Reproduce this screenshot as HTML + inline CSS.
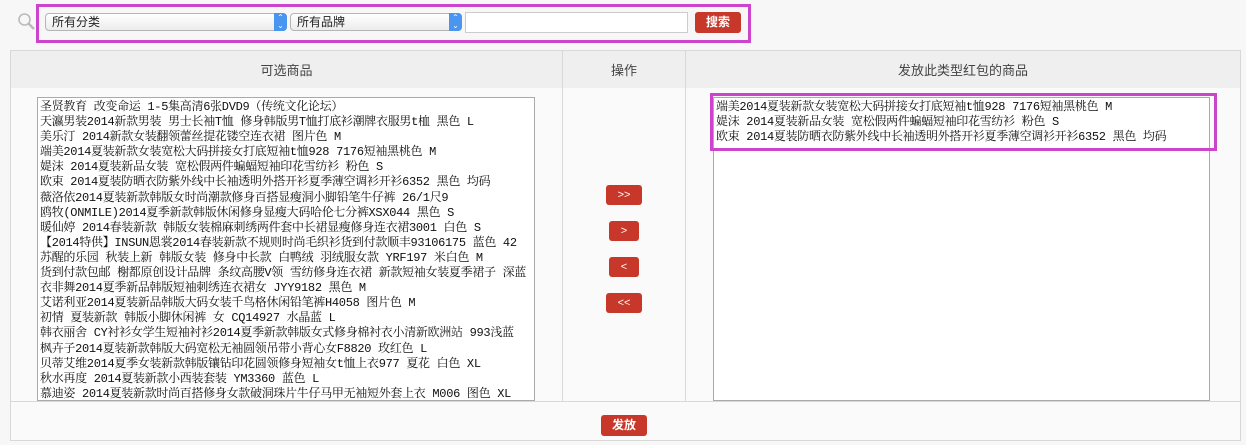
<!DOCTYPE html>
<html><head><meta charset="utf-8"><style>
*{box-sizing:border-box;margin:0;padding:0}
body{width:1246px;height:445px;background:#f7f7f7;position:relative;overflow:hidden;font-family:"Liberation Sans","Noto Sans CJK SC",sans-serif;font-size:12px;color:#333}
.a{position:absolute}
.sel{position:absolute;top:13px;height:18px;border:1px solid #b5b5b5;border-radius:4px;background:linear-gradient(#fff,#ececec);font-size:12px;line-height:16px;padding-left:6px;color:#222}
.sel i{position:absolute;right:-1px;top:-1px;width:13px;height:18px;background:#4a95f0;border-radius:0 4px 4px 0;color:#fff;font-style:normal;font-size:8px;line-height:8px;text-align:center;padding-top:1px}
.btn{position:absolute;background:#c8382a;color:#fff;border-radius:3px;text-align:center;font-size:11px;line-height:20px}
.ta{position:absolute;background:#fff;border:1px solid #aaa;font-family:"Liberation Mono","Noto Serif CJK SC",monospace;font-size:12px;line-height:15.1px;white-space:nowrap;overflow:hidden;padding:1px 2px;color:#111;letter-spacing:-0.3px}
.th{position:absolute;top:51px;height:37px;background:#efefef;text-align:center;line-height:40px;font-size:13px;color:#444}
</style></head><body>
<svg class="a" style="left:17px;top:12px" width="20" height="20" viewBox="0 0 20 20"><circle cx="7.5" cy="7.5" r="5.5" fill="none" stroke="#bbb" stroke-width="1.6"/><line x1="11.5" y1="11.5" x2="17" y2="17" stroke="#bbb" stroke-width="2.5"/></svg>
<div class="a" style="left:36px;top:4px;width:715px;height:39px;border:3px solid #cc44cc"></div>
<div class="sel" style="left:45px;width:242px">所有分类<i>⌃<br>⌄</i></div>
<div class="sel" style="left:290px;width:172px">所有品牌<i>⌃<br>⌄</i></div>
<div class="a" style="left:465px;top:12px;width:223px;height:21px;border:1px solid #ccc;background:#fff"></div>
<div class="btn" style="left:695px;top:12px;width:46px;height:21px;font-size:12px;font-weight:bold;line-height:21px">搜索</div>

<div class="a" style="left:10px;top:50px;width:1231px;height:391px;border:1px solid #d8d8d8;background:#fafafa"></div>
<div class="th" style="left:11px;width:551px">可选商品</div>
<div class="th" style="left:563px;width:122px">操作</div>
<div class="th" style="left:686px;width:554px">发放此类型红包的商品</div>
<div class="a" style="left:562px;top:51px;width:1px;height:350px;background:#d8d8d8"></div>
<div class="a" style="left:685px;top:51px;width:1px;height:350px;background:#d8d8d8"></div>
<div class="a" style="left:11px;top:401px;width:1229px;height:1px;background:#d8d8d8"></div>

<div class="ta" style="left:37px;top:97px;width:498px;height:304px;padding-top:2px">圣贤教育 改变命运 1-5集高清6张DVD9（传统文化论坛）<br>天瀛男装2014新款男装 男士长袖T恤 修身韩版男T恤打底衫潮牌衣服男t桖 黑色 L<br>美乐汀 2014新款女装翻领蕾丝提花镂空连衣裙 图片色 M<br>端美2014夏装新款女装宽松大码拼接女打底短袖t恤928 7176短袖黑桃色 M<br>媞沫 2014夏装新品女装 宽松假两件蝙蝠短袖印花雪纺衫 粉色 S<br>欧束 2014夏装防晒衣防紫外线中长袖透明外搭开衫夏季薄空调衫开衫6352 黑色 均码<br>薇洛依2014夏装新款韩版女时尚潮款修身百搭显瘦洞小脚铅笔牛仔裤 26/1尺9<br>鸥牧(ONMILE)2014夏季新款韩版休闲修身显瘦大码哈伦七分裤XSX044 黑色 S<br>暖仙婷 2014春装新款 韩版女装棉麻刺绣两件套中长裙显瘦修身连衣裙3001 白色 S<br>【2014特供】INSUN恩裳2014春装新款不规则时尚毛织衫货到付款顺丰93106175 蓝色 42<br>苏醒的乐园 秋装上新 韩版女装 修身中长款 白鸭绒 羽绒服女款 YRF197 米白色 M<br>货到付款包邮 榭都原创设计品牌 条纹高腰V领 雪纺修身连衣裙 新款短袖女装夏季裙子 深蓝<br>衣非舞2014夏季新品韩版短袖刺绣连衣裙女 JYY9182 黑色 M<br>艾诺利亚2014夏装新品韩版大码女装千鸟格休闲铅笔裤H4058 图片色 M<br>初情 夏装新款 韩版小脚休闲裤 女 CQ14927 水晶蓝 L<br>韩衣丽舍 CY衬衫女学生短袖衬衫2014夏季新款韩版女式修身棉衬衣小清新欧洲站 993浅蓝<br>枫卉子2014夏装新款韩版大码宽松无袖圆领吊带小背心女F8820 玫红色 L<br>贝蒂艾维2014夏季女装新款韩版镶钻印花圆领修身短袖女t恤上衣977 夏花 白色 XL<br>秋水再度 2014夏装新款小西装套装 YM3360 蓝色 L<br>慕迪姿 2014夏装新款时尚百搭修身女款破洞珠片牛仔马甲无袖短外套上衣 M006 图色 XL</div>

<div class="ta" style="left:713px;top:97px;width:497px;height:304px;padding-top:2px">端美2014夏装新款女装宽松大码拼接女打底短袖t恤928 7176短袖黑桃色 M<br>媞沫 2014夏装新品女装 宽松假两件蝙蝠短袖印花雪纺衫 粉色 S<br>欧束 2014夏装防晒衣防紫外线中长袖透明外搭开衫夏季薄空调衫开衫6352 黑色 均码</div>
<div class="a" style="left:710px;top:93px;width:507px;height:58px;border:3px solid #cc44cc"></div>

<div class="btn" style="left:606px;top:185px;width:36px;height:20px">&gt;&gt;</div>
<div class="btn" style="left:609px;top:221px;width:30px;height:20px">&gt;</div>
<div class="btn" style="left:609px;top:257px;width:30px;height:20px">&lt;</div>
<div class="btn" style="left:606px;top:293px;width:36px;height:20px">&lt;&lt;</div>
<div class="btn" style="left:601px;top:415px;width:46px;height:21px;font-size:12px;font-weight:bold;line-height:21px">发放</div>
</body></html>
